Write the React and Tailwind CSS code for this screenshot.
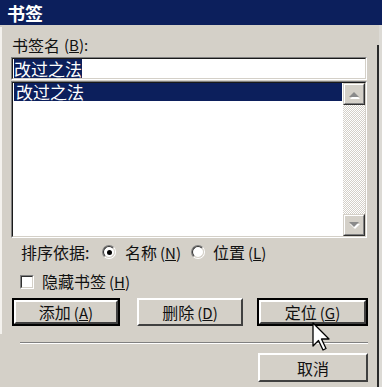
import React from "react";

function Sunken({ className = "", innerClassName = "", children }) {
  return (
    <div className={"border border-t-[#808080] border-l-[#808080] border-b-white border-r-white " + className}>
      <div className={"h-full border border-t-[#1a1a1a] border-l-[#1a1a1a] border-b-[#d4d0c8] border-r-[#d4d0c8] bg-white " + innerClassName}>
        {children}
      </div>
    </div>
  );
}

function Raised({ className = "", children }) {
  return (
    <div className={"border border-t-[#d4d0c8] border-l-[#d4d0c8] border-b-[#303030] border-r-[#303030] " + className}>
      <div className="h-full border border-t-white border-l-white border-b-[#808080] border-r-[#808080] bg-[#d4d0c8] flex items-center justify-center">
        {children}
      </div>
    </div>
  );
}

function Button({ def = false, className = "", label, mn }) {
  const inner = (
    <div className="h-full border-2 border-t-white border-l-white border-b-[#404040] border-r-[#404040] bg-[#d4d0c8] flex items-center justify-center">
      <span className="text-[16px] leading-[20px] text-[#111]">
        {label}
        {mn && (
          <span className="text-[15px] ml-[3px]">
            (<span className="underline">{mn}</span>)
          </span>
        )}
      </span>
    </div>
  );
  if (def) {
    return <div className={"border-2 border-black " + className}>{inner}</div>;
  }
  return <div className={className}>{inner}</div>;
}

function Arrow({ up }) {
  return (
    <svg width="14" height="9" viewBox="0 0 14 9">
      {up ? (
        <>
          <polygon points="2,8 12,8 7,3" fill="#ffffff" transform="translate(1,1)" />
          <polygon points="2,7 12,7 7,2" fill="#8a8a8a" />
        </>
      ) : (
        <>
          <polygon points="2,2 12,2 7,7" fill="#ffffff" transform="translate(1,1)" />
          <polygon points="2,1 12,1 7,6" fill="#8a8a8a" />
        </>
      )}
    </svg>
  );
}

function Radio({ checked }) {
  return (
    <div className="w-[14px] h-[14px] rounded-full border border-t-[#808080] border-l-[#808080] border-b-white border-r-white">
      <div className="w-full h-full rounded-full border border-t-[#303030] border-l-[#303030] border-b-[#d4d0c8] border-r-[#d4d0c8] bg-white flex items-center justify-center">
        {checked && <div className="w-[5px] h-[5px] rounded-full bg-black" />}
      </div>
    </div>
  );
}

export default function App() {
  return (
    <div className="w-[382px] h-[387px] bg-[#d4d0c8] flex flex-col overflow-hidden relative font-['Noto_Sans_CJK_SC','Noto_Sans',sans-serif] text-[#111]">
      <div className="h-[25px] bg-[#0c1f5c] flex items-center pl-[7px]">
        <span className="text-white font-bold text-[18px] leading-[20px]">书签</span>
      </div>
      <div className="flex-1 flex">
        <div className="w-[2px] h-[307px] mt-[2px] bg-[#f4f2ee]" />
        <div className="w-[375px] flex flex-col">
          <div className="ml-[10px] mt-[10px] h-[20px] flex items-center text-[16px] leading-[20px]">
            书签名
            <span className="text-[15px] ml-[4px]">
              (<span className="underline">B</span>):
            </span>
          </div>
          <Sunken className="ml-[9px] mt-[2px] w-[356px] h-[23px]" innerClassName="flex items-center">
            <span className="ml-[1px] bg-[#0c1f5c] text-white text-[17px] leading-[19px]">改过之法</span>
          </Sunken>
          <Sunken className="ml-[9px] mt-[1px] w-[356px] h-[157px]" innerClassName="flex">
            <div className="flex-1">
              <div className="h-[18px] ml-[1px] mr-[1px] bg-[#0c1f5c] text-white text-[17px] leading-[18px] pl-[2px]">改过之法</div>
            </div>
            <div className="w-[22px] flex flex-col">
              <Raised className="h-[22px]">
                <Arrow up />
              </Raised>
              <div className="flex-1 bg-[repeating-conic-gradient(#d4d0c8_0%_25%,#ffffff_0%_50%)] bg-[length:2px_2px]" />
              <Raised className="h-[22px]">
                <Arrow />
              </Raised>
            </div>
          </Sunken>
          <div className="mt-[3px] h-[22px] flex items-center pl-[19px] text-[16px] leading-[20px]">
            <span className="w-[81px]">排序依据:</span>
            <Radio checked />
            <span className="ml-[9px] w-[66px]">
              名称<span className="text-[15px] ml-[3px]">(<span className="underline">N</span>)</span>
            </span>
            <Radio />
            <span className="ml-[8px]">
              位置<span className="text-[15px] ml-[3px]">(<span className="underline">L</span>)</span>
            </span>
          </div>
          <div className="mt-[8px] h-[21px] flex items-center pl-[18px] text-[16px] leading-[20px]">
            <div className="w-[14px] h-[14px] border border-t-[#808080] border-l-[#808080] border-b-white border-r-white">
              <div className="w-full h-full border border-t-[#303030] border-l-[#303030] border-b-[#d4d0c8] border-r-[#d4d0c8] bg-white" />
            </div>
            <span className="ml-[8px]">
              隐藏书签<span className="text-[15px] ml-[3px]">(<span className="underline">H</span>)</span>
            </span>
          </div>
          <div className="mt-[6px] h-[28px] flex pl-[10px]">
            <Button def className="w-[108px]" label="添加" mn="A" />
            <Button className="ml-[17px] w-[106px]" label="删除" mn="D" />
            <Button def className="ml-[14px] w-[111px]" label="定位" mn="G" />
          </div>
          <div className="ml-[18px] mt-[16px] w-[348px] h-[2px] border-t border-t-[#808080] border-b border-b-white" />
          <Button className="ml-[256px] mt-[9px] w-[110px] h-[29px]" label="取消" />
        </div>
        <div className="w-[2px] mt-[20px] bg-[#2a2a2a]" />
        <div className="w-[3px] bg-[#dcdad5]" />
      </div>
      <svg className="absolute left-[312px] top-[322px]" width="20" height="30" viewBox="0 0 20 30">
        <polygon
          points="1,1 1,24 6.5,18.5 11,28 14,26.5 9.5,17 17,17"
          fill="#ffffff"
          stroke="#000000"
          strokeWidth="1.3"
          strokeLinejoin="round"
        />
      </svg>
    </div>
  );
}
